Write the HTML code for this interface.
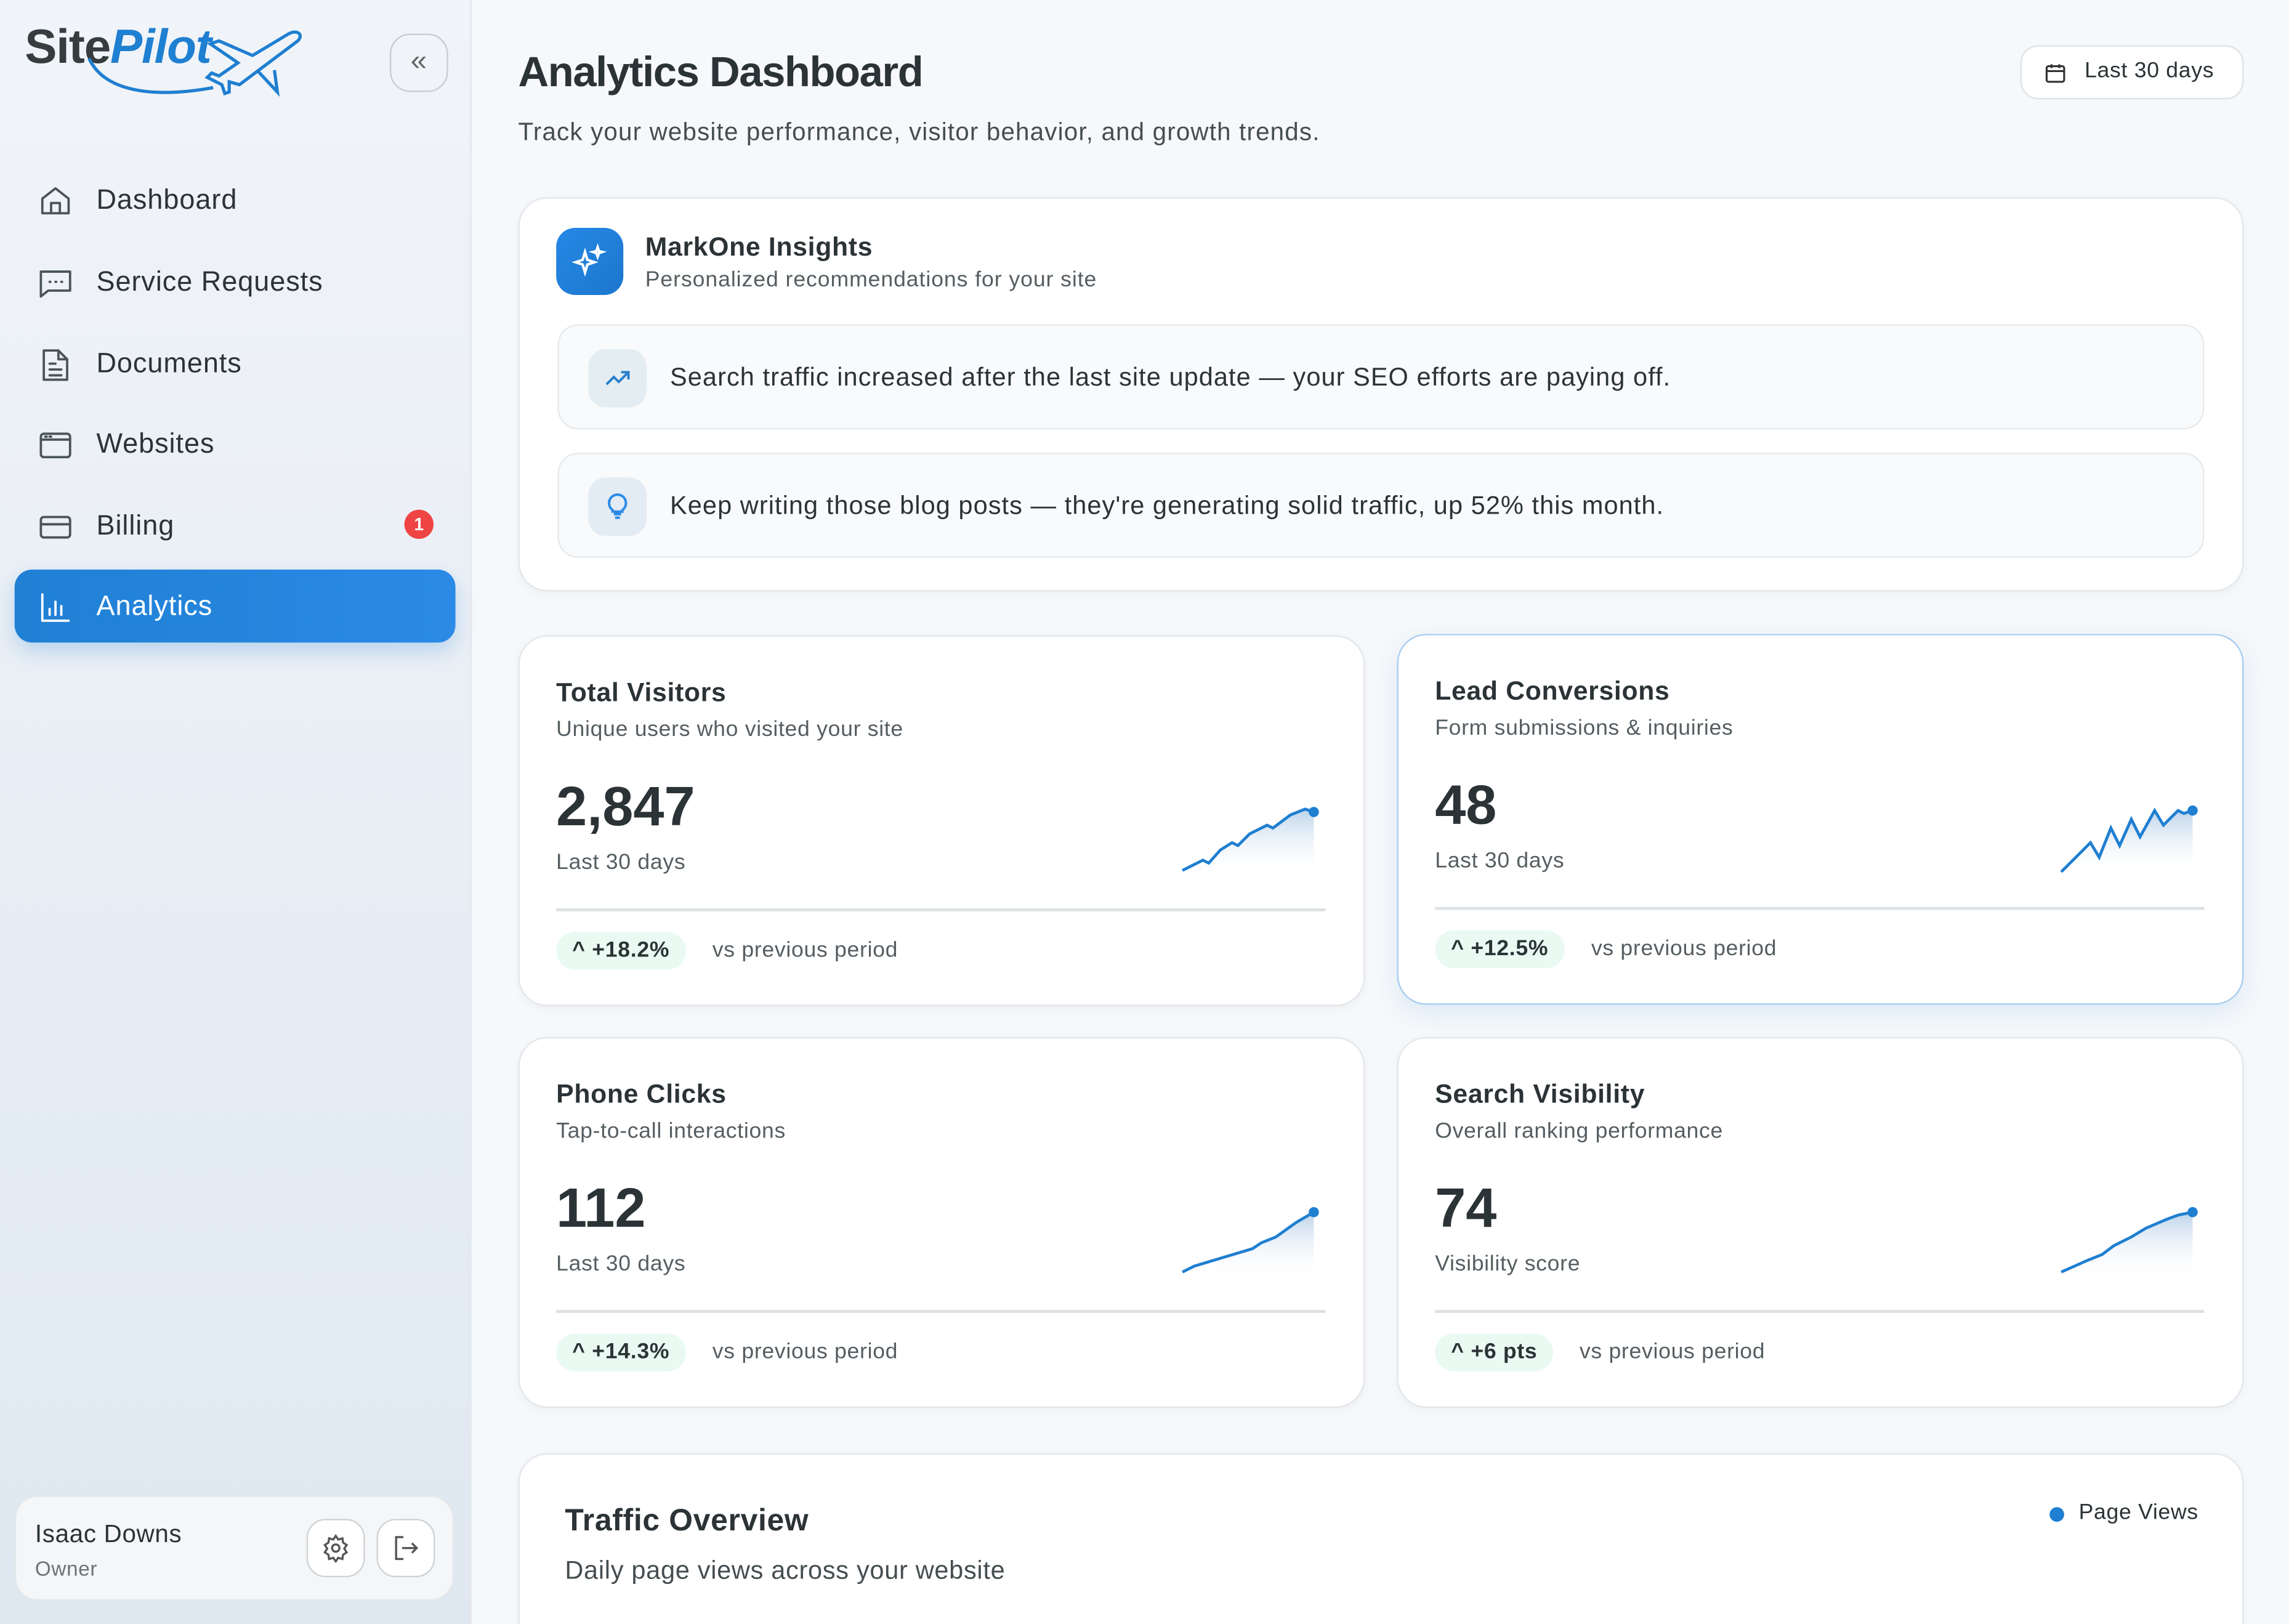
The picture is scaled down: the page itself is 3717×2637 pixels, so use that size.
<!DOCTYPE html>
<html><head><meta charset="utf-8"><style>
*{box-sizing:border-box;margin:0;padding:0}
html,body{width:3717px;height:2637px;overflow:hidden;background:#f6f8fa}
#s{position:absolute;left:0;top:0;width:1568px;height:1112px;overflow:hidden;transform:scale(2.3705,2.3714);transform-origin:0 0;font-family:"Liberation Sans",sans-serif;color:#2b3336;background:#f6f8fa;letter-spacing:.3px}
.abs{position:absolute}
.side{left:0;top:0;width:323px;height:1112px;background:linear-gradient(#f1f4f8,#dfe8f1);border-right:1px solid #e2e6ea}
.nav{left:26px;height:24px;display:flex;align-items:center;font-size:19px;color:#2b3336;letter-spacing:.4px}
.nav svg{width:24px;height:24px;margin-right:16px;fill:none;stroke:#4b5559;stroke-width:1.6;stroke-linecap:round;stroke-linejoin:round}
.card{background:#fff;border:1.5px solid #e3e7eb;border-radius:20px;box-shadow:0 2px 6px rgba(0,0,0,.04)}
.ct{font-size:18px;font-weight:bold;color:#2b3336;position:absolute;left:25px;top:28px}
.cs{font-size:15px;color:#555d61;position:absolute;left:25px;top:55px}
.num{font-size:38px;font-weight:bold;position:absolute;left:25px;top:96px;color:#2b3336;letter-spacing:0}
.l3{font-size:15px;color:#555d61;position:absolute;left:25px;top:146px}
.div{position:absolute;left:25px;right:26px;top:186px;height:1.5px;background:#dde1e4}
.pill{position:absolute;left:25px;top:202px;height:26px;padding:0 11px;border-radius:13px;background:#eafaf3;font-size:15px;font-weight:bold;color:#2b3336;line-height:26px}
.vs{position:absolute;top:202px;line-height:26px;font-size:15px;color:#555d61}
.spark{position:absolute;right:26px;top:114px;width:100px;height:50px}
.row{position:absolute;left:26px;right:26px;height:72px;background:#f8fafb;border:1.5px solid #e6eaed;border-radius:14px}
.ri{position:absolute;left:20px;top:16px;width:40px;height:40px;border-radius:12px}
.rt{position:absolute;left:76px;top:0;line-height:70px;font-size:17.5px;color:#2b3336;letter-spacing:.45px}
</style></head><body><div id="s">
<div class="abs side">
 <div class="abs" style="left:17px;top:13px;font-size:33px;font-weight:bold;letter-spacing:-.5px"><span style="color:#353d3f">Site</span><span style="color:#1f7fd1;font-style:italic">Pilot</span></div>
 <svg class="abs" style="left:18px;top:18px" width="190" height="50" viewBox="0 0 190 50" fill="none" stroke="#1f7fd1" stroke-width="2.2"><path d="M43 22 C55 48 95 48 128 42"/><path d="M146 40 L186 10 C190 6 186 2 180 5 L155 20 L132 10 L126 12 L145 25 L132 34 L127 32 L124 35 L134 40 L136 46 L139 45 L139 38 Z"/><path d="M158 30 L172 45 L170 30"/></svg>
 <div class="abs" style="left:267px;top:23px;width:40px;height:40px;border:1.5px solid #c9cdd0;border-radius:14px;text-align:center;line-height:36px;font-size:20px;color:#666">«</div>
 <div class="abs nav" style="top:126px"><svg viewBox="0 0 24 24"><path d="M3 10 L12 3 L21 10 V20 H3 Z"/><path d="M9 20 V13 H15 V20"/></svg>Dashboard</div>
 <div class="abs nav" style="top:182px"><svg viewBox="0 0 24 24"><path d="M2 4 H22 V17 H7 L2 21 Z"/><path d="M8 11h.5M12 11h.5M16 11h.5"/></svg>Service Requests</div>
 <div class="abs nav" style="top:238px"><svg viewBox="0 0 24 24"><path d="M4 2 H14 L20 8 V22 H4 Z"/><path d="M14 2 V8 H20M8 11h4M8 15h8M8 19h8"/></svg>Documents</div>
 <div class="abs nav" style="top:293px"><svg viewBox="0 0 24 24"><rect x="2" y="4" width="20" height="16" rx="2"/><path d="M2 8 H22M5 6h1M8 6h1"/></svg>Websites</div>
 <div class="abs nav" style="top:349px"><svg viewBox="0 0 24 24"><rect x="2" y="5" width="20" height="14" rx="2"/><path d="M2 10 H22"/></svg>Billing</div>
 <div class="abs" style="left:277px;top:349px;width:20px;height:20px;border-radius:10px;background:#ef4444;color:#fff;font-size:12px;font-weight:bold;text-align:center;line-height:20px;letter-spacing:0">1</div>
 <div class="abs" style="left:10px;top:390px;width:302px;height:50px;border-radius:12px;background:linear-gradient(90deg,#2080d4,#2a8ae6);box-shadow:0 6px 14px rgba(40,130,220,.25)"></div>
 <div class="abs nav" style="top:404px;color:#fff"><svg viewBox="0 0 24 24" style="stroke:#fff"><path d="M3 3 V21 H21M8 17V13M12 17V8M16 17V11"/></svg>Analytics</div>
 <div class="abs" style="left:10px;top:1024px;width:301px;height:72px;border-radius:16px;background:#f4f6f8;border:1px solid #e4e8eb">
  <div class="abs" style="left:13px;top:16px;font-size:17px;color:#2b3336">Isaac Downs</div>
  <div class="abs" style="left:13px;top:41px;font-size:14px;color:#6b7377">Owner</div>
  <div class="abs" style="left:199px;top:15px;width:40px;height:40px;border:1.5px solid #cfd3d6;border-radius:13px;background:#fff"><svg width="20" height="20" viewBox="0 0 24 24" style="margin:9px" fill="none" stroke="#555" stroke-width="1.7"><circle cx="12" cy="12" r="3"/><path d="M12 2l2 3 3.5-1 .5 3.5 3 2-2 3 2 3-3 2-.5 3.5-3.5-1-2 3-2-3-3.5 1-.5-3.5-3-2 2-3-2-3 3-2 .5-3.5 3.5 1z"/></svg></div>
  <div class="abs" style="left:247px;top:15px;width:40px;height:40px;border:1.5px solid #cfd3d6;border-radius:13px;background:#fff"><svg width="20" height="20" viewBox="0 0 24 24" style="margin:9px" fill="none" stroke="#555" stroke-width="1.7"><path d="M10 3H4V21H10M9 12H21M17 8l4 4-4 4"/></svg></div>
 </div>
</div>

<div class="abs" style="left:355px;top:34px;font-size:29px;font-weight:bold;letter-spacing:-.6px;color:#2b3336">Analytics Dashboard</div>
<div class="abs" style="left:355px;top:81px;font-size:17px;color:#454d51;letter-spacing:.5px">Track your website performance, visitor behavior, and growth trends.</div>
<div class="abs" style="left:1384px;top:31px;width:153px;height:37px;border:1.5px solid #dfe3e6;border-radius:12px;background:#fff;font-size:15px;line-height:34px;padding-left:43px;color:#2b3336">Last 30 days
 <svg class="abs" style="left:15px;top:10px" width="16" height="16" viewBox="0 0 24 24" fill="none" stroke="#333" stroke-width="2"><rect x="3" y="5" width="18" height="16" rx="2"/><path d="M3 10H21M8 3V7M16 3V7"/></svg></div>

<div class="abs card" style="left:355px;top:135px;width:1182px;height:270px">
 <div class="abs" style="left:25px;top:20px;width:46px;height:46px;border-radius:13px;background:linear-gradient(135deg,#2588e6,#1c77cc)"><svg width="26" height="26" viewBox="0 0 24 24" style="margin:10px" fill="none" stroke="#fff" stroke-width="1.6"><path d="M9 6 L10.5 11 L15 12.5 L10.5 14 L9 19 L7.5 14 L3 12.5 L7.5 11 Z"/><path d="M17 3 L17.8 5.5 L20 6 L17.8 6.8 L17 9 L16.2 6.8 L14 6 L16.2 5.5 Z"/></svg></div>
 <div class="abs" style="left:86px;top:23px;font-size:18px;font-weight:bold">MarkOne Insights</div>
 <div class="abs" style="left:86px;top:47px;font-size:15px;color:#555d61;letter-spacing:.4px">Personalized recommendations for your site</div>
 <div class="row" style="top:86px"><div class="ri" style="background:#e4eef2"><svg width="20" height="20" viewBox="0 0 24 24" style="margin:10px" fill="none" stroke="#2a7fcc" stroke-width="2"><path d="M3 17 L9 11 L13 15 L21 7M15 7H21V13"/></svg></div><div class="rt">Search traffic increased after the last site update — your SEO efforts are paying off.</div></div>
 <div class="row" style="top:174px"><div class="ri" style="background:#e3ebf4"><svg width="20" height="20" viewBox="0 0 24 24" style="margin:10px" fill="none" stroke="#2a8ae6" stroke-width="2"><path d="M9 18h6M10 21h4M12 2a7 7 0 0 0-4 12.7V16h8v-1.3A7 7 0 0 0 12 2z"/></svg></div><div class="rt">Keep writing those blog posts — they're generating solid traffic, up 52% this month.</div></div>
</div>

<svg width="0" height="0" style="position:absolute"><defs><linearGradient id="g" x1="0" y1="0" x2="0" y2="1"><stop offset="0" stop-color="#bcd3ea"/><stop offset="1" stop-color="#fff" stop-opacity="0"/></linearGradient></defs></svg>

<div class="abs card" style="left:355px;top:435px;width:580px;height:254px">
 <div class="ct">Total Visitors</div><div class="cs">Unique users who visited your site</div><div class="num">2,847</div><div class="l3">Last 30 days</div>
 <svg class="spark" viewBox="0 0 100 50"><path d="M2 46 L16 39 L20 41 L28 32 L36 27 L40 29 L48 21 L60 15 L64 17 L76 8 L86 4 L92 6 V50 H2Z" fill="url(#g)"/><path d="M2 46 L16 39 L20 41 L28 32 L36 27 L40 29 L48 21 L60 15 L64 17 L76 8 L86 4 L92 6" fill="none" stroke="#1f7fd1" stroke-width="2"/><circle cx="92" cy="6" r="3.5" fill="#1f7fd1"/></svg>
 <div class="div"></div><div class="pill">^ +18.2%</div><div class="vs" style="left:132px">vs previous period</div>
</div>
<div class="abs card" style="left:957px;top:434px;width:580px;height:254px;border-color:#a9cdf0;box-shadow:0 6px 16px rgba(40,130,220,.12)">
 <div class="ct">Lead Conversions</div><div class="cs">Form submissions &amp; inquiries</div><div class="num">48</div><div class="l3">Last 30 days</div>
 <svg class="spark" viewBox="0 0 100 50"><path d="M2 48 L22 28 L28 38 L36 18 L42 30 L50 12 L56 24 L66 6 L72 16 L82 6 L86 8 L92 6 V50 H2Z" fill="url(#g)"/><path d="M2 48 L22 28 L28 38 L36 18 L42 30 L50 12 L56 24 L66 6 L72 16 L82 6 L86 8 L92 6" fill="none" stroke="#1f7fd1" stroke-width="2"/><circle cx="92" cy="6" r="3.5" fill="#1f7fd1"/></svg>
 <div class="div"></div><div class="pill">^ +12.5%</div><div class="vs" style="left:132px">vs previous period</div>
</div>
<div class="abs card" style="left:355px;top:710px;width:580px;height:254px">
 <div class="ct">Phone Clicks</div><div class="cs">Tap-to-call interactions</div><div class="num">112</div><div class="l3">Last 30 days</div>
 <svg class="spark" viewBox="0 0 100 50"><path d="M2 46 L10 42 L30 36 L50 30 L56 26 L66 22 L80 12 L92 5 V50 H2Z" fill="url(#g)"/><path d="M2 46 L10 42 L30 36 L50 30 L56 26 L66 22 L80 12 L92 5" fill="none" stroke="#1f7fd1" stroke-width="2"/><circle cx="92" cy="5" r="3.5" fill="#1f7fd1"/></svg>
 <div class="div"></div><div class="pill">^ +14.3%</div><div class="vs" style="left:132px">vs previous period</div>
</div>
<div class="abs card" style="left:957px;top:710px;width:580px;height:254px">
 <div class="ct">Search Visibility</div><div class="cs">Overall ranking performance</div><div class="num">74</div><div class="l3">Visibility score</div>
 <svg class="spark" viewBox="0 0 100 50"><path d="M2 46 L20 38 L30 34 L38 28 L50 22 L60 16 L74 10 L82 7 L92 5 V50 H2Z" fill="url(#g)"/><path d="M2 46 L20 38 L30 34 L38 28 L50 22 L60 16 L74 10 L82 7 L92 5" fill="none" stroke="#1f7fd1" stroke-width="2"/><circle cx="92" cy="5" r="3.5" fill="#1f7fd1"/></svg>
 <div class="div"></div><div class="pill">^ +6 pts</div><div class="vs" style="left:124px">vs previous period</div>
</div>

<div class="abs card" style="left:355px;top:995px;width:1182px;height:160px">
 <div class="abs" style="left:31px;top:34px;font-size:21px;font-weight:bold">Traffic Overview</div>
 <div class="abs" style="left:31px;top:69px;font-size:17.5px;color:#454d51">Daily page views across your website</div>
 <div class="abs" style="left:1048px;top:36px;width:10px;height:10px;border-radius:5px;background:#1f7fd1"></div>
 <div class="abs" style="left:1068px;top:31px;font-size:15px;color:#2b3336">Page Views</div>
</div>
</div></body></html>
